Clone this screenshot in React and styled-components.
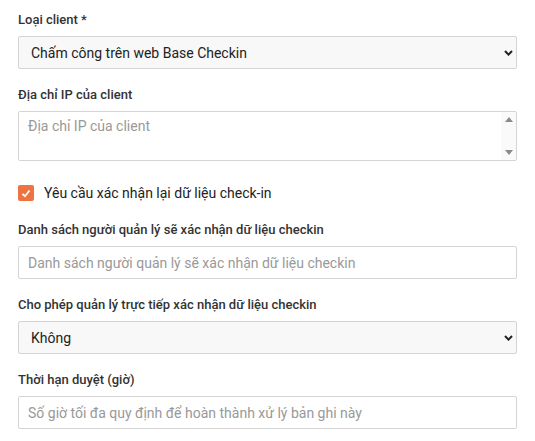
import React from "react";
import styled, { createGlobalStyle } from "styled-components";

const Global = createGlobalStyle`
  html, body { margin: 0; padding: 0; background: #fff; }
  body { font-family: Roboto, "Noto Sans", Arial, sans-serif; color: #333; }
  * { box-sizing: border-box; }
`;

const Form = styled.form`
  display: flex;
  flex-direction: column;
  padding: 11px 18px 0 18px;
  width: 535px;
`;

const Group = styled.div`
  display: flex;
  flex-direction: column;
  margin-bottom: ${(p) => p.$mb ?? 17}px;
`;

const Label = styled.label`
  font-size: 13px;
  font-weight: 500;
  line-height: 18px;
  color: #333;
  margin-bottom: 7px;
`;

const ControlWrap = styled.div`
  position: relative;
  height: ${(p) => p.$h}px;
`;

const Select = styled.select`
  appearance: none;
  -webkit-appearance: none;
  width: 100%;
  height: 33px;
  border: 1px solid #d4d4d4;
  border-radius: 2px;
  background: #f8f8f8;
  font-family: Roboto, "Noto Sans", Arial, sans-serif;
  font-size: 14px;
  color: #222;
  padding: 0 30px 0 12px;
  outline: none;
`;

const Chevron = styled.svg`
  position: absolute;
  right: 4px;
  top: 14px;
  width: 9px;
  height: 6px;
  pointer-events: none;
`;

const TextArea = styled.textarea`
  width: 100%;
  height: 50px;
  border: 1px solid #d4d4d4;
  border-radius: 2px;
  background: #fff;
  font-family: Roboto, "Noto Sans", Arial, sans-serif;
  font-size: 14px;
  color: #333;
  padding: 6px 24px 6px 9px;
  resize: none;
  outline: none;
  display: block;
  &::placeholder { color: #999; }
`;

const ScrollTrack = styled.div`
  position: absolute;
  top: 1px;
  right: 1px;
  bottom: 1px;
  width: 15px;
  background: #fafafa;
  display: flex;
  flex-direction: column;
  justify-content: space-between;
  align-items: center;
  padding: 5px 0;
  pointer-events: none;
`;

const Arrow = styled.span`
  width: 0;
  height: 0;
  border-left: 4px solid transparent;
  border-right: 4px solid transparent;
  ${(p) => (p.$down ? "border-top: 5px solid #8a8a8a;" : "border-bottom: 5px solid #8a8a8a;")}
`;

const Input = styled.input`
  width: 100%;
  height: 33px;
  border: 1px solid #d4d4d4;
  border-radius: 2px;
  background: #fff;
  font-family: Roboto, "Noto Sans", Arial, sans-serif;
  font-size: 14px;
  color: #333;
  padding: 0 9px;
  outline: none;
  &::placeholder { color: #999; }
`;

const CheckRow = styled.label`
  display: flex;
  align-items: center;
  gap: 10px;
  height: 18px;
  margin: 23px 0 19px 0;
  font-size: 14px;
  color: #222;
`;

const Box = styled.span`
  width: 16px;
  height: 16px;
  border-radius: 2px;
  background: #ee7341;
  display: flex;
  align-items: center;
  justify-content: center;
  flex: none;
`;

const ChevronIcon = () => (
  <Chevron viewBox="0 0 9 6">
    <path d="M1 1 L4.5 4.6 L8 1" fill="none" stroke="#222" strokeWidth="2" />
  </Chevron>
);

export default function App() {
  return (
    <>
      <Global />
      <Form onSubmit={(e) => e.preventDefault()}>
        <Group>
          <Label>Loại client *</Label>
          <ControlWrap $h={33}>
            <Select defaultValue="web">
              <option value="web">Chấm công trên web Base Checkin</option>
            </Select>
            <ChevronIcon />
          </ControlWrap>
        </Group>
        <Group $mb={0}>
          <Label>Địa chỉ IP của client</Label>
          <ControlWrap $h={50}>
            <TextArea placeholder="Địa chỉ IP của client" />
            <ScrollTrack>
              <Arrow />
              <Arrow $down />
            </ScrollTrack>
          </ControlWrap>
        </Group>
        <CheckRow>
          <Box>
            <svg width="10" height="9" viewBox="0 0 10 9">
              <path d="M1.5 4.8 L4 7.2 L8.5 1.5" fill="none" stroke="#fff" strokeWidth="1.8" />
            </svg>
          </Box>
          Yêu cầu xác nhận lại dữ liệu check-in
        </CheckRow>
        <Group>
          <Label>Danh sách người quản lý sẽ xác nhận dữ liệu checkin</Label>
          <Input placeholder="Danh sách người quản lý sẽ xác nhận dữ liệu checkin" />
        </Group>
        <Group>
          <Label>Cho phép quản lý trực tiếp xác nhận dữ liệu checkin</Label>
          <ControlWrap $h={33}>
            <Select defaultValue="no">
              <option value="no">Không</option>
              <option value="yes">Có</option>
            </Select>
            <ChevronIcon />
          </ControlWrap>
        </Group>
        <Group>
          <Label>Thời hạn duyệt (giờ)</Label>
          <Input placeholder="Số giờ tối đa quy định để hoàn thành xử lý bản ghi này" />
        </Group>
      </Form>
    </>
  );
}
